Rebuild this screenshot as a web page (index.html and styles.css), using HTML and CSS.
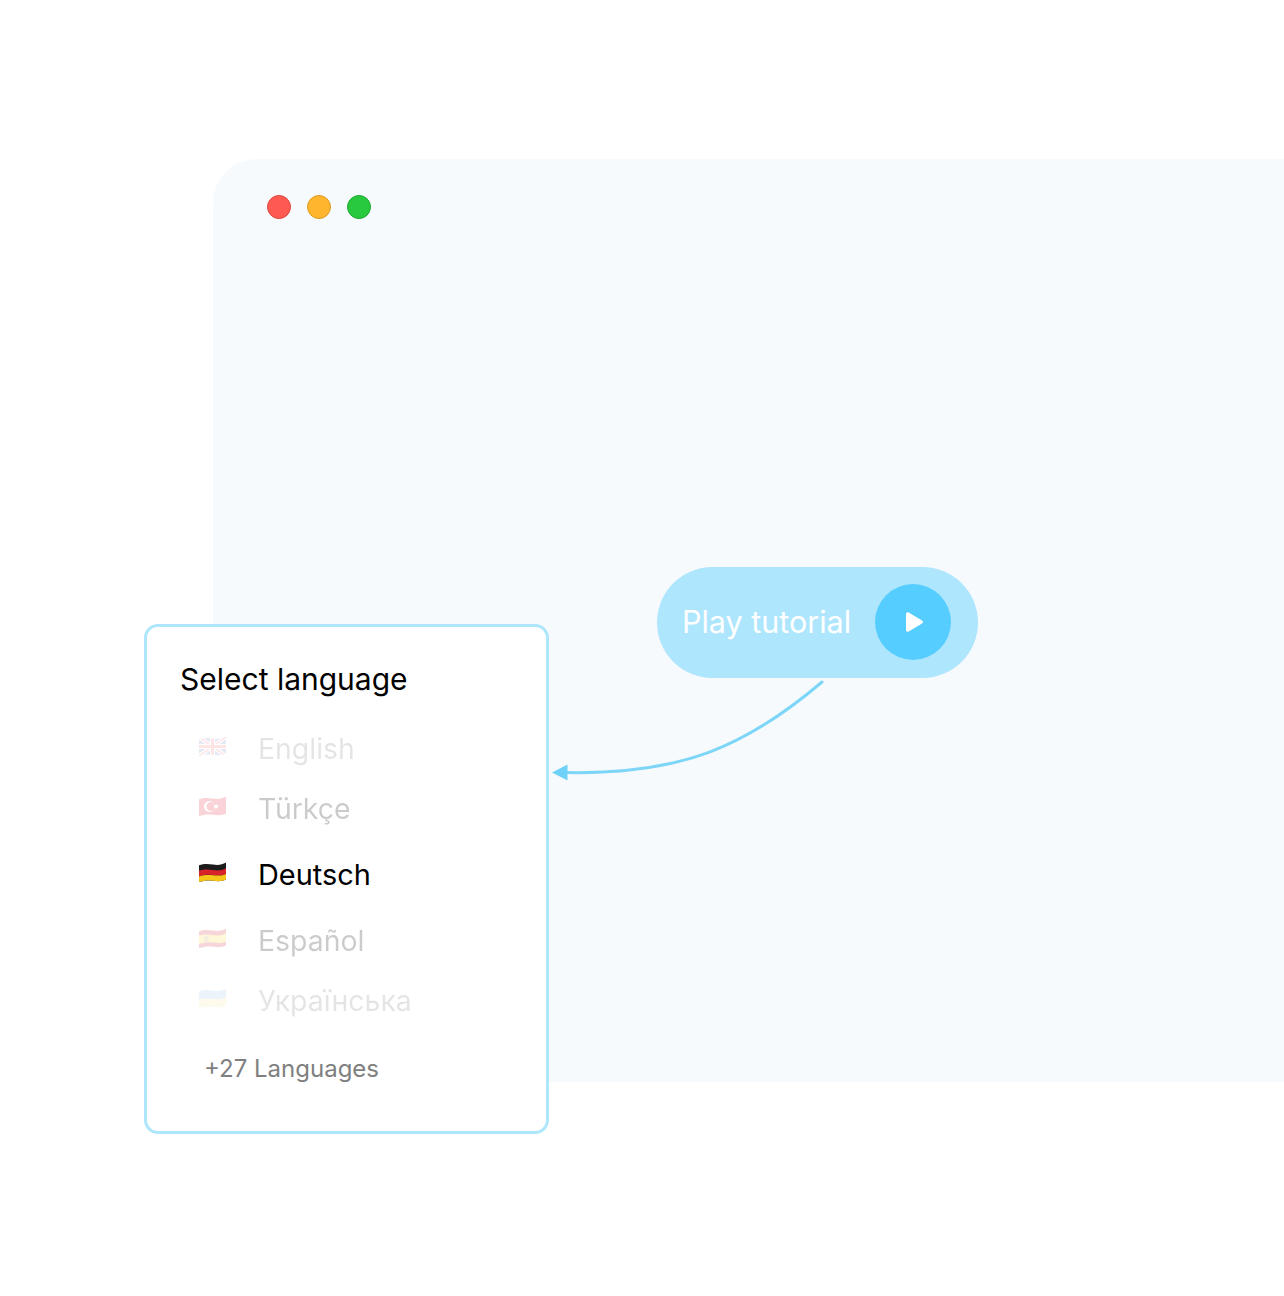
FILE: index.html
```html
<!DOCTYPE html>
<html lang="en">
  <head>
    <meta charset="UTF-8" />
    <title>Play tutorial</title>
    <link rel="stylesheet" href="styles.css">
  </head>
  <body>
    <svg class="defs" width="0" height="0" aria-hidden="true">
      <defs>
        <clipPath id="wave">
          <path d="M0 3.2C5 1.6 9 1.8 14 2.6S23 3 27 .6V17.6C23 19.6 19 19.6 14 18.8S5 18.4 0 20Z" />
        </clipPath>
      </defs>
    </svg>
    <div class="stage">
      <div class="window">
        <div class="dots">
          <span class="dot red"></span>
          <span class="dot yellow"></span>
          <span class="dot green"></span>
        </div>
      </div>

      <div class="play-pill">
        <span class="play-label">Play tutorial</span>
        <span class="play-circle">
          <svg class="play-icon" width="17" height="20" viewBox="0 0 17 20">
            <path d="M0 2v16c0 1.500 1.400 2.300 2.700 1.600L16 11.600c1.300-.7 1.300-2.500 0-3.200L2.700.4C1.400-.3 0 .5 0 2z" fill="#fff" />
          </svg>
        </span>
      </div>

      <svg class="arrow" width="280" height="105" viewBox="0 0 280 105">
        <path d="M270 2C196 65 131 95 14 92.500" fill="none" stroke="#7dd6f7" stroke-width="3" stroke-linecap="round" />
        <path d="M0 92.500L15.500 84.500V100.500Z" fill="#6ed2f8" />
      </svg>

      <div class="lang-card">
        <h2 class="lang-title">Select language</h2>
        <ul class="lang-list">
          <li class="lang-row faded-more">
            <svg class="flag flag-uk" viewBox="0 0 27 21">
              <g clip-path="url(#wave)">
                <rect width="27" height="21" fill="#3a4f8f" />
                <path d="M0 1L27 20M27 1L0 20" stroke="#fff" stroke-width="3.600" />
                <path d="M0 1L27 20M27 1L0 20" stroke="#d0243c" stroke-width="1.600" />
                <path d="M13.500 0V21M0 10.500H27" stroke="#fff" stroke-width="5" />
                <path d="M13.500 0V21M0 10.500H27" stroke="#d0243c" stroke-width="2.800" />
              </g>
            </svg>
            <span>English</span>
          </li>
          <li class="lang-row faded">
            <svg class="flag" viewBox="0 0 27 21">
              <g clip-path="url(#wave)">
                <rect width="27" height="21" fill="#e5283c" />
                <circle cx="10.500" cy="10.500" r="5.500" fill="#fff" />
                <circle cx="12" cy="10.500" r="4.500" fill="#e5283c" />
                <circle cx="17" cy="10.500" r="1.900" fill="#fff" />
              </g>
            </svg>
            <span>Türkçe</span>
          </li>
          <li class="lang-row active">
            <svg class="flag" viewBox="0 0 27 21">
              <g clip-path="url(#wave)">
                <rect width="27" height="21" fill="#1c1c1c" />
                <path d="M0 8.600C5 7 9 7.200 14 8S23 8.400 27 6.200V12C23 14 19 14 14 13.200S5 12.800 0 14.400Z" fill="#d8232a" />
                <path d="M0 14.400C5 12.800 9 13 14 13.200S23 14 27 12V21H0Z" fill="#f5c518" />
              </g>
            </svg>
            <span>Deutsch</span>
          </li>
          <li class="lang-row faded">
            <svg class="flag" viewBox="0 0 27 21">
              <g clip-path="url(#wave)">
                <rect width="27" height="21" fill="#d8394a" />
                <path d="M0 7.500C5 6 9 6.200 14 7S23 7.400 27 5.200V13.400C23 15.400 19 15.400 14 14.600S5 14.200 0 15.800Z" fill="#fbd84a" />
                <rect x="5" y="7.800" width="4.500" height="6" rx="1" fill="#c9a96e" />
              </g>
            </svg>
            <span>Español</span>
          </li>
          <li class="lang-row faded-more">
            <svg class="flag" viewBox="0 0 27 21">
              <g clip-path="url(#wave)">
                <rect width="27" height="21" fill="#5b94dc" />
                <path d="M0 11.600C5 10 9 10.200 14 11S23 11.400 27 9.200V21H0Z" fill="#fbdc5a" />
              </g>
            </svg>
            <span>Українська</span>
          </li>
        </ul>
        <div class="lang-more">+27 Languages</div>
      </div>
    </div>
  </body>
</html>
```

FILE: styles.css
```css
body {
  margin: 0;
  background-color: #fff;
  font-family: Inter, "Noto Sans", sans-serif;
}

.defs {
  position: absolute;
}

.stage {
  position: relative;
  height: 1296px;
  padding: 159px 0 0 213px;
  box-sizing: border-box;
  overflow: hidden;
}

.window {
  height: 923px;
  padding: 36px 0 0 54px;
  box-sizing: border-box;
  background-color: #f6fafd;
  border-radius: 44px 0 0 0;
}

.dots {
  display: flex;
  gap: 16px;
}

.dot {
  width: 24px;
  height: 24px;
  border-radius: 50%;
  box-sizing: border-box;
  border: 1px solid;
}

.red {
  background-color: #ff5a52;
  border-color: #e0443e;
}

.yellow {
  background-color: #ffb52e;
  border-color: #dc9b26;
}

.green {
  background-color: #28c83f;
  border-color: #1fa82f;
}

.play-pill {
  position: absolute;
  left: 657px;
  top: 567px;
  width: 321px;
  height: 111px;
  padding: 0 27px 0 25px;
  box-sizing: border-box;
  display: flex;
  align-items: center;
  justify-content: space-between;
  background-color: #aee6fe;
  border-radius: 56px;
}

.play-label {
  color: #fff;
  font-size: 30.5px;
  font-weight: 400;
  margin-bottom: 2px;
}

.play-circle {
  width: 76px;
  height: 76px;
  margin-top: -1px;
  border-radius: 50%;
  background-color: #56cdff;
  display: flex;
  align-items: center;
  justify-content: center;
}

.play-icon {
  margin-left: 3px;
}

.arrow {
  position: absolute;
  left: 552px;
  top: 680px;
}

.lang-card {
  position: absolute;
  left: 144px;
  top: 624px;
  width: 405px;
  height: 510px;
  padding: 34px 33px 0;
  box-sizing: border-box;
  background-color: #fff;
  border: 3px solid #aee6fb;
  border-radius: 14px;
}

.lang-title {
  margin: 0 0 21px;
  font-size: 30px;
  line-height: 36px;
  font-weight: 400;
  color: #000;
}

.lang-list {
  list-style: none;
  margin: 0;
  padding: 0 0 0 19px;
}

.lang-row {
  display: flex;
  align-items: center;
  gap: 32px;
  height: 60px;
  font-size: 28.4px;
  color: #000;
}

.lang-row .flag {
  width: 27px;
  height: 21px;
  margin-top: -4px;
}

.lang-row span {
  line-height: 36px;
  margin-top: 2px;
}

.active {
  height: 72px;
  font-size: 28.9px;
}

.faded {
  opacity: 0.2;
}

.faded-more {
  opacity: 0.1;
}

.flag-uk {
  filter: contrast(1.6);
}

.lang-more {
  margin: 24px 0 0 24px;
  font-size: 24px;
  line-height: 30px;
  color: #808080;
}
```
